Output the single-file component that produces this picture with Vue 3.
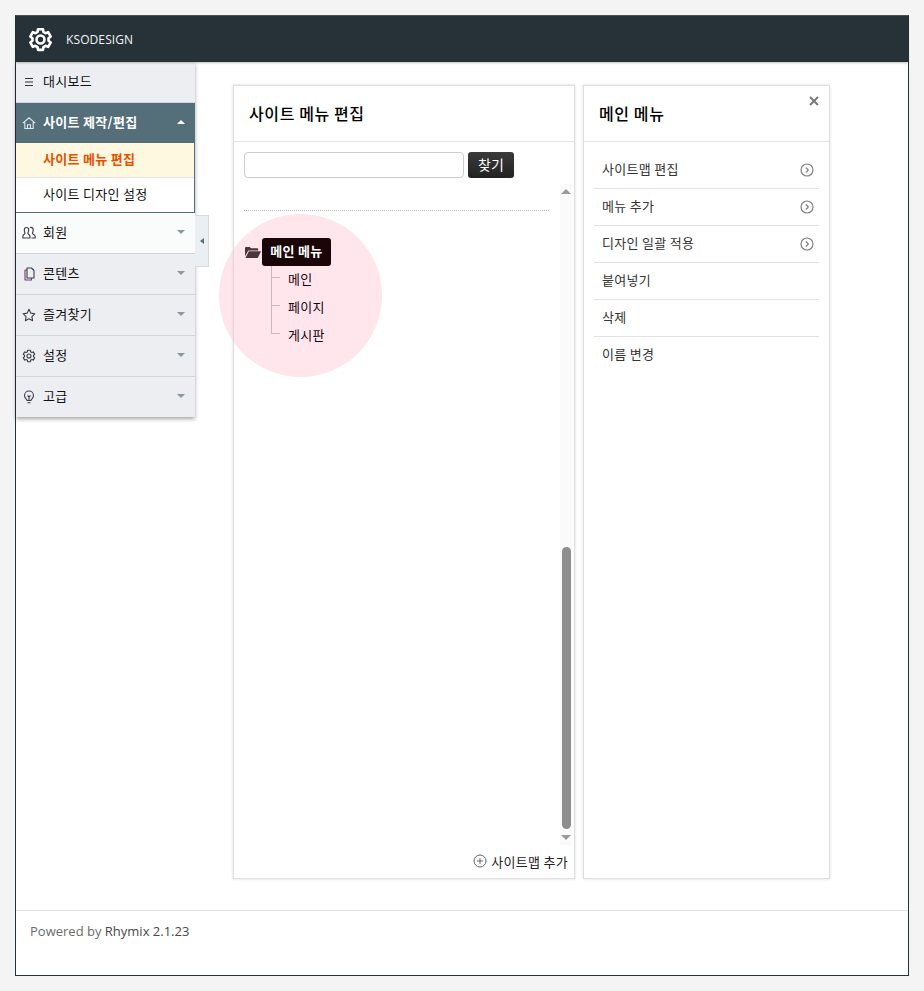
<script setup>
const cogPath = (() => {
  const pts = []
  for (let i = 0; i < 6; i++) {
    const a = (i * 60 - 90) * Math.PI / 180
    const s = 0.24
    const p = (r, d) => `${(12 + r * Math.cos(a + d)).toFixed(2)} ${(12 + r * Math.sin(a + d)).toFixed(2)}`
    pts.push(p(7.8, -0.36), p(10.2, -s), p(10.2, s), p(7.8, 0.36))
  }
  return 'M' + pts.join('L') + 'Z'
})()

const collapsed = [
  { label: '회원', icon: 'people', cls: 'light' },
  { label: '콘텐츠', icon: 'copy' },
  { label: '즐겨찾기', icon: 'star' },
  { label: '설정', icon: 'cog' },
  { label: '고급', icon: 'bulb' },
]
const actions = [
  { label: '사이트맵 편집', more: true },
  { label: '메뉴 추가', more: true },
  { label: '디자인 일괄 적용', more: true },
  { label: '붙여넣기' },
  { label: '삭제' },
  { label: '이름 변경' },
]
const children = ['메인', '페이지', '게시판']
</script>

<template>
  <div class="frame">
    <header class="topbar">
      <svg class="logo" viewBox="0 0 24 24" fill="none" stroke="#fff" stroke-width="2.500" stroke-linejoin="round">
        <path :d="cogPath" />
        <circle cx="12" cy="12" r="3.800" />
      </svg>
      <span class="brand">KSODESIGN</span>
    </header>

    <div class="body">
      <nav class="sidebar">
        <a class="item dash">
          <svg class="ico" viewBox="0 0 14 14" stroke="#333" stroke-width="1"><path d="M3 3.500h8M3 7h8M3 10.500h8" /></svg>
          <span>대시보드</span>
        </a>
        <a class="item open">
          <svg class="ico" viewBox="0 0 14 14" fill="none" stroke="#dfe6ea" stroke-width="1.100"><path d="M.8 7.200 7 1.800l6.200 5.400M2.800 6v6.500h8.400V6M5.500 12.500V8.800h3v3.700" /></svg>
          <span>사이트 제작/편집</span>
          <i class="caret up"></i>
        </a>
        <div class="sub">
          <a class="sub-item on">사이트 메뉴 편집</a>
          <a class="sub-item">사이트 디자인 설정</a>
        </div>
        <a v-for="m in collapsed" :key="m.label" class="item" :class="m.cls">
          <svg class="ico" viewBox="0 0 14 14" fill="none" stroke="#3c3c48" stroke-width="1.100" stroke-linejoin="round">
            <template v-if="m.icon === 'people'">
              <path d="M4.500 1.500c1.500 0 2.200 1.100 2.200 2.500S6 6.500 5.800 7.300c.2.900 2.200 1.200 2.200 3.200v1.500H.8v-1.500c0-2 2-2.300 2.200-3.200C2.700 6.500 2.300 5.300 2.300 4s.7-2.500 2.200-2.500Z" />
              <path d="M8 1.500c.3-.1.600-.1.900-.1 1.500 0 2.300 1.200 2.300 2.600s-.5 2.500-.8 3.300c.2.900 2.800 1.200 2.800 3.200V12H9.500" />
            </template>
            <template v-else-if="m.icon === 'copy'">
              <path d="M5 1h4.500L12 3.500V11H5Z" />
              <path d="M5 3H3v10h6.500v-2" stroke="#7a3b6e" />
            </template>
            <path v-else-if="m.icon === 'star'" d="m7 1.300 1.800 3.800 4.100.6-3 2.900.7 4.100L7 10.800l-3.600 1.900.7-4.100-3-2.900 4.100-.6Z" />
            <template v-else-if="m.icon === 'cog'">
              <path :d="cogPath" transform="scale(.583)" stroke-width="1.900" />
              <circle cx="7" cy="7" r="2" />
            </template>
            <template v-else>
              <path d="M5 10.500C4.700 9 2.500 8.300 2.500 5.500a4.500 4.500 0 0 1 9 0c0 2.800-2.200 3.500-2.500 5ZM5.500 12.800h3M5.500 5.500 7 7l1.500-1.500M7 7v3.500" />
            </template>
          </svg>
          <span>{{ m.label }}</span>
          <i class="caret"></i>
        </a>
        <button class="collapse" aria-label="메뉴 접기"><i></i></button>
      </nav>

      <main class="content">
        <section class="panel tree-panel">
          <h2 class="panel-title">사이트 메뉴 편집</h2>
          <div class="search">
            <input class="search-input" type="text" />
            <button class="search-btn">찾기</button>
          </div>
          <div class="tree-wrap">
            <div class="tree-scroll">
              <hr class="dotted" />
              <div class="tree">
                <div class="spot"></div>
                <div class="root">
                  <svg class="folder" viewBox="0 0 16 11"><path d="M0 1.200C0 .5.500 0 1.200 0h3.600l1.200 1.300h6.200c.6 0 1 .4 1 1V3.400H3.300L0 9.200Z" fill="#4a3638" /><path d="M3.800 4.200H16l-3.200 6.800H.5Z" fill="#4a3638" /></svg>
                  <span class="root-label">메인 메뉴</span>
                </div>
                <ul class="children">
                  <li v-for="c in children" :key="c">{{ c }}</li>
                </ul>
              </div>
            </div>
            <div class="scrollbar">
              <i class="arrow up"></i>
              <div class="track"><div class="thumb"></div></div>
              <i class="arrow down"></i>
            </div>
          </div>
          <div class="tree-foot">
            <svg class="plus" viewBox="0 0 14 14" fill="none" stroke="#666" stroke-width="1"><circle cx="7" cy="7" r="6" /><path d="M7 4v6M4 7h6" /></svg>
            <span>사이트맵 추가</span>
          </div>
        </section>

        <section class="panel side-panel">
          <h2 class="panel-title side-title">메인 메뉴</h2>
          <button class="close" aria-label="닫기">
            <svg viewBox="0 0 10 10" stroke="#777" stroke-width="2"><path d="m1 1 8 8M9 1l-8 8" /></svg>
          </button>
          <ul class="actions">
            <li v-for="a in actions" :key="a.label">
              <span>{{ a.label }}</span>
              <svg v-if="a.more" class="more" viewBox="0 0 14 14" fill="none" stroke="#808080" stroke-width="1.200"><circle cx="7" cy="7" r="6" /><path d="m5.800 4.500 2.500 2.500-2.500 2.500" /></svg>
            </li>
          </ul>
        </section>
      </main>
    </div>

    <footer class="foot">Powered by <b>Rhymix 2.1.23</b></footer>
  </div>
</template>

<style>
html, body { margin: 0; background: #f4f4f4; }
</style>

<style scoped>
* { box-sizing: border-box; }
.frame {
  margin: 15px 15px 0;
  width: 894px;
  height: 961px;
  display: flex;
  flex-direction: column;
  background: #fff;
  border: 1px solid #263238;
  border-top-color: #4a5257;
  font-family: "Noto Sans CJK KR", "Open Sans", sans-serif;
  font-size: 13px;
  letter-spacing: .3px;
  color: #111;
}
.topbar {
  height: 46px;
  flex: none;
  display: flex;
  align-items: center;
  padding-left: 12px;
  background: #263238;
  box-shadow: 0 1px 2px rgba(0, 0, 0, .25);
  position: relative;
  z-index: 2;
}
.logo { width: 25px; height: 25px; }
.brand {
  margin-left: 13px;
  color: #f2f4f5;
  font-family: "Open Sans", sans-serif;
  font-size: 12px;
  letter-spacing: .1px;
}
.body { flex: 1; display: flex; min-height: 0; }
.sidebar {
  position: relative;
  width: 179px;
  flex: none;
  align-self: flex-start;
  box-shadow: 0 2px 4px rgba(0, 0, 0, .35);
  background: #eceef1;
  z-index: 1;
}
.item {
  height: 41px;
  display: flex;
  align-items: center;
  padding-left: 6px;
  background: #eceef1;
  border-bottom: 1px solid #cfd6da;
  position: relative;
}
.item > span { padding-bottom: 4px; }
.item:last-of-type { border-bottom: 0; height: 40px; }
.item.light { background: #fafbfb; }
.item.open {
  height: 40px;
  background: #546e7a;
  border-bottom: 0;
  color: #fff;
  font-weight: 700;
}
.ico { width: 14px; height: 14px; flex: none; margin-right: 7px; }
.caret {
  position: absolute;
  right: 10px;
  top: 17px;
  border: 4px solid transparent;
  border-top: 4px solid #8a98a0;
  border-bottom: 0;
}
.caret.up { border-top: 0; border-bottom: 4px solid #fff; }
.sub { border-right: 1px solid #546e7a; border-bottom: 1px solid #546e7a; background: #fff; }
.sub-item {
  display: flex;
  align-items: center;
  height: 35px;
  padding: 0 0 4px 27px;
  background: #fff;
  border-bottom: 1px solid #e4e4e4;
}
.sub-item:last-child { border-bottom: 0; height: 34px; }
.sub-item.on { height: 35px; background: #fff8e1; color: #e65100; font-weight: 700; }
.collapse {
  position: absolute;
  left: 179px;
  top: 153px;
  width: 14px;
  height: 52px;
  padding: 0;
  background: #eceff1;
  border: 1px solid #d5dadd;
  border-left: 0;
  display: flex;
  align-items: center;
  justify-content: center;
}
.collapse i {
  border: 3px solid transparent;
  border-right: 4px solid #546e7a;
  border-left: 0;
}
.content {
  flex: 1;
  display: flex;
  gap: 8px;
  padding: 23px 0 31px 38px;
  align-items: stretch;
  min-width: 0;
}
.panel {
  position: relative;
  background: #fff;
  border: 1px solid #dedede;
  padding: 1px;
  box-shadow: 0 0 3px rgba(0, 0, 0, .14);
  display: flex;
  flex-direction: column;
}
.tree-panel { width: 342px; }
.side-panel { width: 247px; }
.panel-title {
  flex: none;
  height: 55px;
  margin: 0 -1px;
  padding: 0 0 2px 15px;
  display: flex;
  align-items: center;
  border-bottom: 1px solid #e2e2e2;
  font-size: 16px;
  font-weight: 500;
  letter-spacing: .6px;
  color: #000;
}
.search { flex: none; display: flex; gap: 4px; padding: 10px 0 0 9px; }
.search-input {
  width: 220px;
  height: 26px;
  border: 1px solid #ccc;
  border-radius: 4px;
  background: #fff;
}
.search-btn {
  width: 46px;
  height: 26px;
  padding: 0 0 3px;
  border: 0;
  border-radius: 3px;
  background: linear-gradient(#3a3a3a, #222);
  color: #fff;
  font: inherit;
  font-size: 14px;
}
.tree-wrap { flex: 1; display: flex; min-height: 0; margin-top: 6px; }
.tree-scroll { flex: 1; padding-left: 9px; position: relative; min-width: 0; }
.dotted {
  width: 305px;
  margin: 26px 0 0;
  border: 0;
  border-top: 1px dotted #b5b5b5;
}
.tree { position: relative; margin-top: 27px; }
.spot {
  position: absolute;
  left: -25px;
  top: -24px;
  width: 163px;
  height: 163px;
  border-radius: 50%;
  background: rgba(255, 200, 214, .47);
  pointer-events: none;
}
.root { position: relative; display: flex; align-items: center; }
.folder { width: 16px; height: 11px; margin: 0 1px 0 1px; }
.root-label {
  width: 69px;
  height: 28px;
  padding-bottom: 3px;
  border-radius: 3px;
  background: #1a0508;
  color: #fff;
  font-weight: 700;
  display: flex;
  align-items: center;
  justify-content: center;
}
.children {
  position: relative;
  list-style: none;
  margin: 0;
  padding: 0 0 0 44px;
}
.children::before {
  content: "";
  position: absolute;
  left: 27px;
  top: 0;
  height: 67px;
  border-left: 1px solid #cdb9bd;
}
.children li { position: relative; height: 28px; line-height: 26px; color: #1c0510; }
.children li::before {
  content: "";
  position: absolute;
  left: -17px;
  top: 11px;
  width: 9px;
  border-top: 1px solid #cdb9bd;
}
.scrollbar {
  width: 12px;
  margin-right: 1px;
  flex: none;
  display: flex;
  flex-direction: column;
  align-items: center;
  background: #fafafa;
}
.arrow { flex: none; width: 0; height: 0; border: 5px solid transparent; }
.arrow.up { margin-top: 5px; border-top: 0; border-bottom: 5px solid #999; }
.arrow.down { margin-bottom: 5px; border-bottom: 0; border-top: 5px solid #999; }
.track { flex: 1; width: 100%; display: flex; flex-direction: column; justify-content: flex-end; padding: 0 1.500px 6px; }
.thumb { height: 282px; border-radius: 5px; background: #8e8e8e; }
.tree-foot {
  flex: none;
  height: 32px;
  display: flex;
  align-items: center;
  justify-content: flex-end;
  gap: 4px;
  padding-right: 5px;
  color: #222;
}
.plus { width: 14px; height: 14px; }
.close {
  position: absolute;
  right: 10px;
  top: 10px;
  width: 10px;
  height: 10px;
  padding: 0;
  border: 0;
  background: none;
  display: flex;
}
.close svg { width: 10px; height: 10px; }
.actions { list-style: none; margin: 10px 9px 0; padding: 0; }
.actions li {
  height: 37px;
  display: flex;
  align-items: center;
  justify-content: space-between;
  padding: 0 5px 0 8px;
  border-bottom: 1px solid #e2e2e2;
  color: #333;
}
.actions li > span { padding-bottom: 4px; }
.actions li:last-child { border-bottom: 0; }
.more { width: 14px; height: 14px; }
.foot {
  flex: none;
  height: 65px;
  padding: 10px 14px;
  border-top: 1px solid #e2e2e2;
  font-family: "Open Sans", sans-serif;
  font-size: 13px;
  letter-spacing: 0;
  line-height: 20px;
  color: #6b6b6b;
}
.foot b { font-weight: 500; color: #484848; }
</style>
